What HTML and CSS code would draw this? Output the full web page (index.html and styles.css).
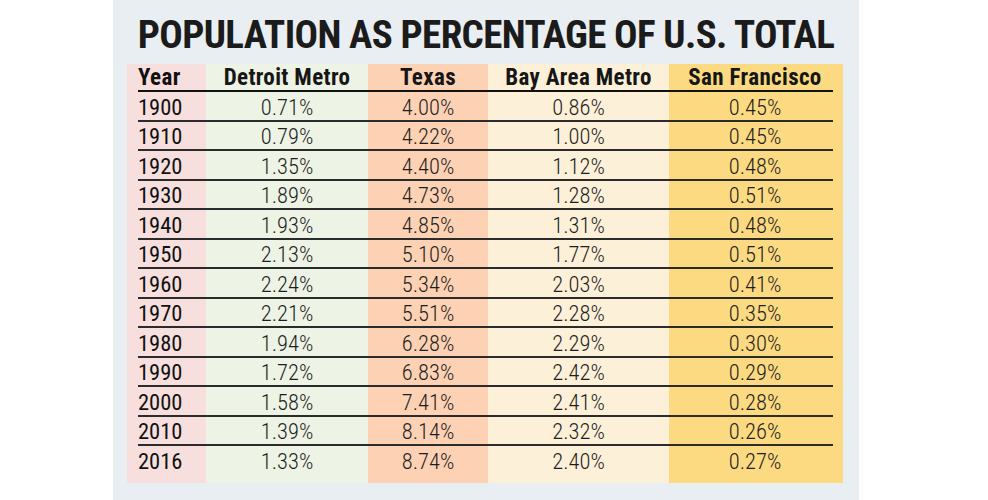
FILE: index.html
```html
<!DOCTYPE html>
<html lang="en">
<head>
<meta charset="utf-8">
<title>Population as percentage of U.S. total</title>
<link rel="stylesheet" href="styles.css">
</head>
<body>
<div class="panel">
  <h1 class="title">POPULATION AS PERCENTAGE OF U.S. TOTAL</h1>
  <div class="table">
    <div class="row head">
      <div class="cell year">Year</div>
      <div class="cell">Detroit Metro</div>
      <div class="cell">Texas</div>
      <div class="cell">Bay Area Metro</div>
      <div class="cell sf">San Francisco</div>
    </div>
    <div class="row"><div class="cell year">1900</div><div class="cell">0.71%</div><div class="cell">4.00%</div><div class="cell">0.86%</div><div class="cell sf">0.45%</div></div>
    <div class="row"><div class="cell year">1910</div><div class="cell">0.79%</div><div class="cell">4.22%</div><div class="cell">1.00%</div><div class="cell sf">0.45%</div></div>
    <div class="row"><div class="cell year">1920</div><div class="cell">1.35%</div><div class="cell">4.40%</div><div class="cell">1.12%</div><div class="cell sf">0.48%</div></div>
    <div class="row"><div class="cell year">1930</div><div class="cell">1.89%</div><div class="cell">4.73%</div><div class="cell">1.28%</div><div class="cell sf">0.51%</div></div>
    <div class="row"><div class="cell year">1940</div><div class="cell">1.93%</div><div class="cell">4.85%</div><div class="cell">1.31%</div><div class="cell sf">0.48%</div></div>
    <div class="row"><div class="cell year">1950</div><div class="cell">2.13%</div><div class="cell">5.10%</div><div class="cell">1.77%</div><div class="cell sf">0.51%</div></div>
    <div class="row"><div class="cell year">1960</div><div class="cell">2.24%</div><div class="cell">5.34%</div><div class="cell">2.03%</div><div class="cell sf">0.41%</div></div>
    <div class="row"><div class="cell year">1970</div><div class="cell">2.21%</div><div class="cell">5.51%</div><div class="cell">2.28%</div><div class="cell sf">0.35%</div></div>
    <div class="row"><div class="cell year">1980</div><div class="cell">1.94%</div><div class="cell">6.28%</div><div class="cell">2.29%</div><div class="cell sf">0.30%</div></div>
    <div class="row"><div class="cell year">1990</div><div class="cell">1.72%</div><div class="cell">6.83%</div><div class="cell">2.42%</div><div class="cell sf">0.29%</div></div>
    <div class="row"><div class="cell year">2000</div><div class="cell">1.58%</div><div class="cell">7.41%</div><div class="cell">2.41%</div><div class="cell sf">0.28%</div></div>
    <div class="row"><div class="cell year">2010</div><div class="cell">1.39%</div><div class="cell">8.14%</div><div class="cell">2.32%</div><div class="cell sf">0.26%</div></div>
    <div class="row last"><div class="cell year">2016</div><div class="cell">1.33%</div><div class="cell">8.74%</div><div class="cell">2.40%</div><div class="cell sf">0.27%</div></div>
  </div>
</div>
</body>
</html>
```
FILE: styles.css
```css
html, body {
  margin: 0;
  padding: 0;
  background: #ffffff;
}

.panel {
  margin-left: 113px;
  width: 746px;
  height: 500px;
  background: #e8eef1;
  padding-top: 12px;
  box-sizing: border-box;
}

.title {
  margin: 0;
  font-family: "Roboto Condensed", "Roboto", "Liberation Sans", sans-serif;
  font-stretch: condensed;
  font-weight: 700;
  font-size: 39px;
  line-height: 46px;
  color: #1b1b1b;
  text-align: center;
  white-space: nowrap;
  letter-spacing: -0.62px;
}

.table {
  margin: 6px 0 0 14px;
  width: 716px;
  padding-bottom: 9px;
  background: linear-gradient(to right,
    #f7dfde 0, #f7dfde 79px,
    #edf3e5 79px, #edf3e5 241px,
    #fdd2b4 241px, #fdd2b4 361px,
    #fdf0d8 361px, #fdf0d8 542px,
    #fcda82 542px, #fcda82 716px);
}

.row {
  display: grid;
  grid-template-columns: 68px 162px 120px 181px 164px;
  margin: 0 10px 0 11px;
  padding-top: 2.5px;
  line-height: 25px;
  border-bottom: 2px solid #2b2b2b;
  font-family: "Roboto Condensed", "Roboto", "Liberation Sans", sans-serif;
  font-stretch: condensed;
  font-weight: 300;
  font-size: 22.5px;
  color: #1e1e1e;
  white-space: nowrap;
}

.row.head {
  padding-top: 1px;
  font-weight: 700;
  font-size: 23px;
  letter-spacing: 0.35px;
  color: #161616;
  border-bottom-color: #111111;
}

.row.last {
  border-bottom: 0;
}

.cell {
  text-align: center;
}

.cell.year {
  text-align: left;
  font-weight: 400;
  color: #111111;
}

.row.head .cell.year {
  font-weight: 700;
}

.cell.sf {
  padding-left: 8px;
}
```
